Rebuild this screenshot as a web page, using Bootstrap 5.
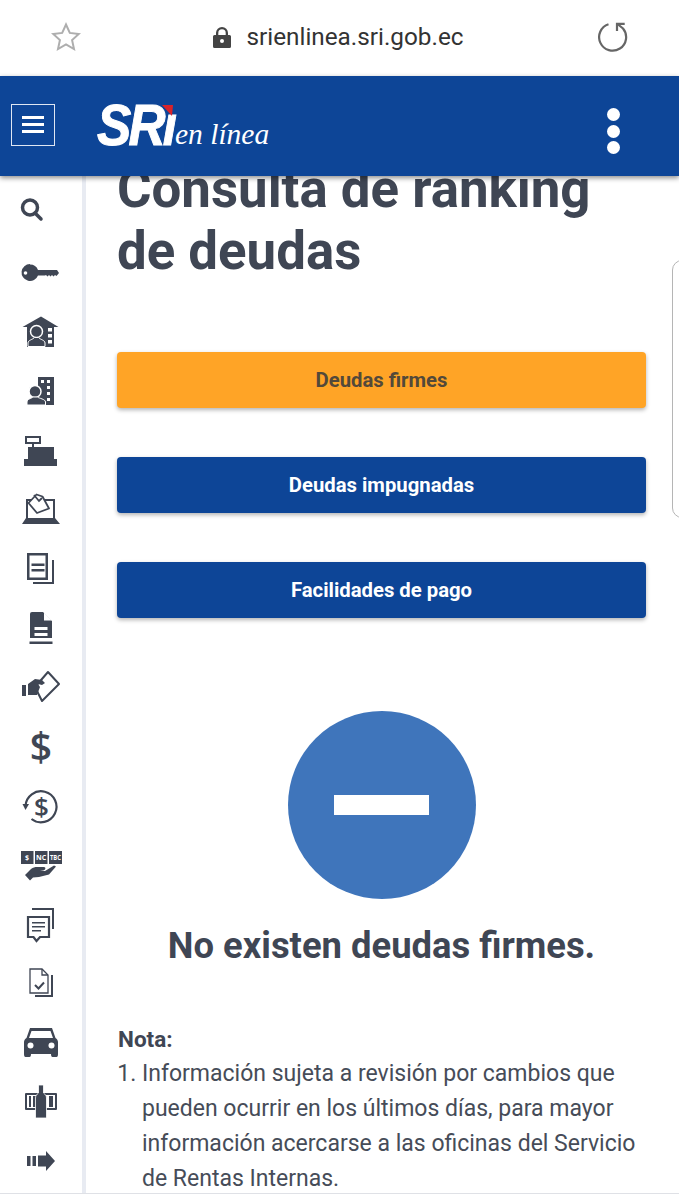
<!DOCTYPE html>
<html lang="es">
<head>
    <meta charset="UTF-8">
    <meta name="viewport" content="width=device-width, initial-scale=1.0">
    <title>Consulta de ranking de deudas</title>
    <link href="https://cdn.jsdelivr.net/npm/bootstrap@5.3.0/dist/css/bootstrap.min.css" rel="stylesheet">
    <style>
        html, body { height: 1200px; overflow: hidden; background: #fff; }
        body { font-family: Roboto, sans-serif; color: #3f4654; }
        .url-bar { height: 76px; padding: 0 51px 2px; }
        .url-center { margin-right: 3px; }
        .url-text { font-size: 24.3px; color: #333; margin-left: 16px; }
        .top-bar { height: 100px; background: #0d4597; box-shadow: 0 2px 5px rgba(0,0,0,.45); z-index: 5; padding: 0 59px 0 11px; }
        .menu-toggle { width: 44px; height: 42px; border: 1px solid #dfe7f3; margin-top: -3px; }
        .menu-toggle span { display: block; width: 22px; height: 3px; background: #fff; margin: 2px auto; }
        .logo-box { margin-left: 42px; margin-top: -3px; height: 50px; width: 180px; white-space: nowrap; }
        .logo-sri { display: inline-block; width: 78px; font: italic 700 57px/50px "Liberation Sans", sans-serif; letter-spacing: -3px; color: #fff; -webkit-text-stroke: 1px #fff; transform: scaleX(.9); transform-origin: left center; }
        .logo-tag { font: italic 400 29.500px/50px "Liberation Serif", serif; color: #fff; padding-top: 9px; }
        .logo-tip { position: absolute; left: 65px; top: 5px; }
        .kebab-stack { margin-top: 10px; }
        .kebab-dot { width: 13px; height: 13px; border-radius: 50%; background: #fff; margin: 3.5px 0; }
        .page-body { height: 1018px; border-bottom: 1px solid #dfe1e6; }
        .side-rail { width: 86px; flex: none; border-right: 4px solid #e8ebf2; padding-top: 8.2px; }
        .rail-item { height: 59.2px; }
        .rail-item svg { width: 42px; height: 42px; fill: #3f4654; stroke: none; }
        .rail-item text { font-family: "Open Sans", sans-serif; }
        .rail-glyph { font: 600 39px/42px "Open Sans", sans-serif; color: #3f4654; }
        .main-pane { padding: 0 33px 0 31px; overflow: hidden; }
        .page-title { font-family: Roboto, sans-serif; font-weight: 700; font-size: 52.800px; line-height: 62px; color: #3f4654; margin: -18px 0 70px; }
        .debt-btn { height: 55.500px; font-size: 20.300px; font-weight: 700; border: 0; border-radius: 4px; box-shadow: 0 2px 4px rgba(0,0,0,.3); margin-bottom: 49.700px; }
        .debt-btn.is-active { background: #ffa426; color: #53493a; }
        .debt-btn.is-plain { background: #0d4597; color: #fff; }
        .empty-circle { width: 188px; height: 188px; border-radius: 50%; background: #3f75bb; margin-top: 43px; }
        .empty-circle span { display: block; width: 95px; height: 20px; background: #fff; }
        .empty-title { font-size: 36.400px; font-weight: 700; line-height: 40px; color: #3f4654; margin: 27px 0 59px; }
        .note-head { font-size: 22.500px; font-weight: 700; line-height: 28px; padding-left: 1px; }
        .note-list { font-size: 23px; line-height: 35px; padding-left: 25px; margin: 3px 0 0; color: #464c58; }
        .edge-tab { position: absolute; right: -10px; top: 260px; width: 17px; height: 258px; border: 1px solid #b5b5b5; border-radius: 10px 0 0 10px; background: #fff; }
    </style>
</head>
<body class="position-relative">
    <!-- barra del navegador -->
    <div class="url-bar d-flex align-items-center justify-content-between">
        <svg width="30" height="30" viewBox="0 0 30 30" fill="none" stroke="#aeaeae" stroke-width="2"><path d="M15 2.500l3.800 8.400 9 1-6.700 6.200 1.900 9L15 22.500l-8 4.600 1.900-9-6.700-6.200 9-1z"/></svg>
        <div class="url-center d-flex align-items-center">
            <svg width="18" height="21" viewBox="0 0 18 21"><path fill="#444" d="M3 8V6a6 6 0 0 1 12 0v2h1.500A1.500 1.500 0 0 1 18 9.500v10a1.500 1.500 0 0 1-1.500 1.500h-15A1.500 1.500 0 0 1 0 19.500v-10A1.500 1.500 0 0 1 1.500 8zm2.300 0h7.400V6a3.700 3.700 0 0 0-7.400 0z"/><circle cx="9" cy="14" r="2" fill="#fff"/></svg>
            <span class="url-text">srienlinea.sri.gob.ec</span>
        </div>
        <svg width="30" height="30" viewBox="0 0 30 30" fill="none" stroke="#666" stroke-width="2.200"><path d="M10.500 2.300A13.500 13.500 0 1 0 25 6.500L19.500 2"/><path d="M26.700 1.800H19V9"/></svg>
    </div>

    <!-- barra principal -->
    <nav class="top-bar d-flex align-items-center justify-content-between position-relative">
        <div class="d-flex align-items-center">
            <div class="menu-toggle d-flex flex-column justify-content-center"><span></span><span></span><span></span></div>
            <div class="logo-box d-flex position-relative">
                <span class="logo-sri">SRı</span>
                <span class="logo-tag">en línea</span>
                <svg class="logo-tip" width="11" height="11" viewBox="0 0 11 11"><path fill="#d8232a" d="M0 0h11l-1 11z"/></svg>
            </div>
        </div>
        <div class="kebab-stack"><div class="kebab-dot"></div><div class="kebab-dot"></div><div class="kebab-dot"></div></div>
    </nav>

    <div class="page-body d-flex">
        <!-- menu lateral -->
        <aside class="side-rail d-flex flex-column align-items-center">
            <div class="rail-item w-100 d-flex align-items-center justify-content-center"><svg viewBox="0 0 42 42"><circle cx="10" cy="14.500" r="7.500" fill="none" stroke="#3f4654" stroke-width="3.500"/><path d="M15 20l6 6" stroke="#3f4654" stroke-width="3.500" stroke-linecap="round"/></svg></div>
            <div class="rail-item w-100 d-flex align-items-center justify-content-center"><svg viewBox="0 0 42 42"><path d="M10 12.500a8.500 8.500 0 0 1 8 5.500h19l2 3-2.500 3-1.500-1-1.500 1.500-1.500-1.500-1.500 1.500-1.500-1.500-1.500 1.500-1.500-1.500-1 .5H18a8.500 8.500 0 1 1-8-11.500z"/><circle cx="5.500" cy="21" r="1.800" fill="#fff"/></svg></div>
            <div class="rail-item w-100 d-flex align-items-center justify-content-center"><svg viewBox="0 0 42 42"><path d="M21 5.500L38.500 16H34v20H7V16H2.500z"/><circle cx="16.500" cy="20.500" r="6" stroke="#fff" stroke-width="1.500"/><path d="M8 35.500v-3.500c0-3 5-3.500 6.500-5.500h4c1.500 2 6.500 2.500 6.500 5.500v3.500z" stroke="#fff"/><path fill="#fff" d="M28 17h4v3.500h-4zM28 23h4v3.500h-4zM28 29h4v3.500h-4z"/></svg></div>
            <div class="rail-item w-100 d-flex align-items-center justify-content-center"><svg viewBox="0 0 42 42"><path d="M18 7h16v28H18z"/><path fill="#fff" d="M21 10h3v3h-3zM27 10h3v3h-3zM27 16h3v3h-3zM27 22h3v3h-3zM27 28h3v3h-3z"/><circle cx="15" cy="21.500" r="6" stroke="#fff" stroke-width="1.500"/><path d="M7 35v-3c0-3 4.500-3.500 6-5h4.500c1.500 1.500 8 2 8 5v3z" stroke="#fff"/></svg></div>
            <div class="rail-item w-100 d-flex align-items-center justify-content-center"><svg viewBox="0 0 42 42"><path fill-rule="evenodd" d="M5 6h16v8h-7v3h20v12h3v7H4v-7h4V17h4v-3H5zm2 2v4h12V8z"/></svg></div>
            <div class="rail-item w-100 d-flex align-items-center justify-content-center"><svg viewBox="0 0 42 42"><path fill-rule="evenodd" d="M6 10h29v19l5 6H2l4-6zm2 2v17h25V12z"/><path d="M8.500 14l8-8.500 6 2 6.500 12-12 4.500z" fill="#fff" stroke="#3f4654" stroke-width="1.800" stroke-linejoin="round"/><path d="M14 6l5 6 3-3" fill="none" stroke="#3f4654" stroke-width="1.800"/></svg></div>
            <div class="rail-item w-100 d-flex align-items-center justify-content-center"><svg viewBox="0 0 42 42"><path fill-rule="evenodd" d="M7 5h21v27H7zm2.500 2.500v22h16v-22z"/><path d="M30 12h4v24H13v-2h19V12z"/><path d="M11.500 15.500h13v2.500h-13zM11.500 21h13v2.500h-13z"/></svg></div>
            <div class="rail-item w-100 d-flex align-items-center justify-content-center"><svg viewBox="0 0 42 42"><path d="M12 5h11l9 9v17H10V7a2 2 0 0 1 2-2z"/><path fill="#fff" d="M24 5.500v8h8zM14.500 20h13v3h-13zM14.500 26h13v3h-13z"/><path d="M9.500 34.500h23v2.500h-23z"/></svg></div>
            <div class="rail-item w-100 d-flex align-items-center justify-content-center"><svg viewBox="0 0 42 42"><path d="M28 6l11 12-17 17-7-14z" fill="#fff" stroke="#3f4654" stroke-width="2" stroke-linejoin="round"/><path d="M2 19h4v11H2zM8 18l7-5 7 1 3 3-3 2-4-1 2 3-3 8H8z"/></svg></div>
            <div class="rail-item w-100 d-flex align-items-center justify-content-center"><span class="rail-glyph">$</span></div>
            <div class="rail-item w-100 d-flex align-items-center justify-content-center"><svg viewBox="0 0 42 42"><path d="M5.500 21a15.500 15.500 0 1 1 6 13" fill="none" stroke="#3f4654" stroke-width="2.200"/><path d="M2.500 19h6.500L5.500 25z"/><text x="21.500" y="30.500" font-size="26" font-weight="600" text-anchor="middle">$</text></svg></div>
            <div class="rail-item w-100 d-flex align-items-center justify-content-center"><svg viewBox="0 0 42 42"><path d="M1 7h12.500v13H1zM15 7h12.500v13H15zM29 7h13v13H29z"/><g fill="#fff" font-size="7" font-weight="700" text-anchor="middle"><text x="7" y="16">$</text><text x="21.200" y="16">NC</text><text x="35.500" y="16" textLength="11" lengthAdjust="spacingAndGlyphs">TBC</text></g><path d="M5 31l6-6c2-1.500 4-2 6-2h7c2 0 2 3-1 3.500l-3 .5h5l9-5.500 2 1-7 8-10 2.500-6 .5-3 3z"/></svg></div>
            <div class="rail-item w-100 d-flex align-items-center justify-content-center"><svg viewBox="0 0 42 42"><path d="M12 5h22v21h-2V7H12z"/><path d="M8 14h21v20H20l-3.500 4-3-4H8z" fill="#fff" stroke="#3f4654" stroke-width="2.200"/><path d="M12 19h13v1.500H12zM12 23h13v1.500H12zM12 27h9v1.500h-9z"/></svg></div>
            <div class="rail-item w-100 d-flex align-items-center justify-content-center"><svg viewBox="0 0 42 42"><path d="M31 13h2v22H15v-2h16z"/><path d="M10 7h12l6 6v18H10z" fill="#fff" stroke="#3f4654" stroke-width="1.300"/><path d="M22 7v6h6" fill="none" stroke="#3f4654" stroke-width="1.300"/><path d="M15 23l3.500 3.500L24 20.500" fill="none" stroke="#3f4654" stroke-width="2"/></svg></div>
            <div class="rail-item w-100 d-flex align-items-center justify-content-center"><svg viewBox="0 0 42 42"><path fill-rule="evenodd" d="M10 7h22l3.500 10c1.500 1 2.500 2.500 2.500 4v12c0 2-.5 3-1.500 3h-4c-1 0-1.500-1-1.500-3H11c0 2-.5 3-1.500 3h-4C4.500 36 4 35 4 33V21c0-1.500 1-3 2.500-4zm1.500 3L9 17h24l-2.500-7z"/><circle cx="10.500" cy="24.500" r="3" fill="#fff"/><circle cx="31.500" cy="24.500" r="3" fill="#fff"/></svg></div>
            <div class="rail-item w-100 d-flex align-items-center justify-content-center"><svg viewBox="0 0 42 42"><path d="M6 13h30v15H6z" fill="none" stroke="#3f4654" stroke-width="2" stroke-linejoin="round"/><path d="M9 15h2v11H9zM13 15h3v11h-3zM29 15h4v11h-4z"/><path d="M18.500 4h5v8c2 1.500 3 3 3 5v20h-11V17c0-2 1-3.500 3-5z" stroke="#fff" stroke-width=".8"/></svg></div>
            <div class="rail-item w-100 d-flex align-items-center justify-content-center"><svg viewBox="0 0 42 42"><path d="M7 16h3.500v10H7zM12.500 16h3.500v10h-3.500zM18 15.500h8V11l9 10-9 10v-4.500h-8z"/></svg></div>
        </aside>

        <!-- contenido -->
        <main class="main-pane flex-grow-1">
            <h1 class="page-title">Consulta de ranking de deudas</h1>
            <div class="d-flex flex-column">
                <button type="button" class="btn debt-btn is-active">Deudas firmes</button>
                <button type="button" class="btn debt-btn is-plain">Deudas impugnadas</button>
                <button type="button" class="btn debt-btn is-plain">Facilidades de pago</button>
            </div>
            <div class="d-flex flex-column align-items-center">
                <div class="empty-circle d-flex align-items-center justify-content-center"><span></span></div>
                <div class="empty-title">No existen deudas firmes.</div>
            </div>
            <div class="note-head">Nota:</div>
            <ol class="note-list">
                <li>Información sujeta a revisión por cambios que pueden ocurrir en los últimos días, para mayor información acercarse a las oficinas del Servicio de Rentas Internas.</li>
            </ol>
        </main>
    </div>
    <div class="edge-tab"></div>
    <script src="https://cdn.jsdelivr.net/npm/bootstrap@5.3.0/dist/js/bootstrap.bundle.min.js"></script>
</body>
</html>
